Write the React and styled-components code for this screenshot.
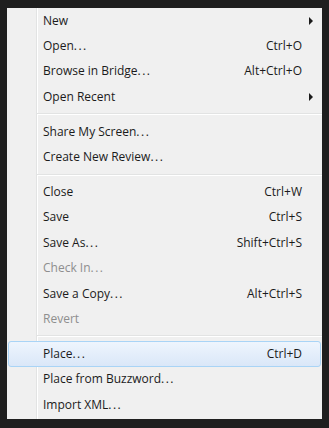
import React from 'react';
import styled, { createGlobalStyle } from 'styled-components';

const GlobalStyle = createGlobalStyle`
  html, body {
    margin: 0;
    padding: 0;
    background: #1f1f1f;
  }
`;

const Frame = styled.div`
  width: 329px;
  height: 428px;
  box-sizing: border-box;
  padding: 8px 7px 9px 7px;
  background: #1f1f1f;
`;

const Menu = styled.div`
  height: 100%;
  box-sizing: border-box;
  display: flex;
  flex-direction: column;
  background: linear-gradient(
    to right,
    #f0f0f0 29px,
    #e2e3e3 29px,
    #e2e3e3 30px,
    #ffffff 30px,
    #ffffff 31px,
    #f0f0f0 31px
  );
  font-family: "Open Sans", "Noto Sans", sans-serif;
  font-size: 12px;
  color: #1b1b1b;
`;

const Row = styled.div`
  position: relative;
  height: 25.4px;
  margin: 0 1px;
  box-sizing: border-box;
  display: grid;
  grid-template-columns: 1fr auto 11px;
  align-items: center;
  padding: 0 7px 0 34px;
  border: 1px solid ${p => (p.$active ? '#a9d4f6' : 'transparent')};
  border-radius: 3px;
  background: ${p =>
    p.$active ? 'linear-gradient(to bottom, #eef5fd, #dae7f8)' : 'transparent'};
  color: ${p => (p.$disabled ? '#8e8e8e' : 'inherit')};
  white-space: nowrap;
`;

const Label = styled.span`
  line-height: 1;
`;

const Dots = styled.span`
  letter-spacing: 1.5px;
`;

const Shortcut = styled.span`
  line-height: 1;
  text-align: right;
`;

const Arrow = styled.span`
  justify-self: end;
  width: 0;
  height: 0;
  border-top: 4px solid transparent;
  border-bottom: 4px solid transparent;
  border-left: 4px solid #1b1b1b;
`;

const Separator = styled.div`
  height: 9.5px;
  display: flex;
  flex-direction: column;
  justify-content: center;
  padding-left: 30px;

  &::before {
    content: '';
    display: block;
    height: 1px;
    background: #e2e3e3;
  }
  &::after {
    content: '';
    display: block;
    height: 1px;
    background: #ffffff;
  }
`;

const groups = [
  [
    { label: 'New', submenu: true },
    { label: 'Open', more: true, shortcut: 'Ctrl+O' },
    { label: 'Browse in Bridge', more: true, shortcut: 'Alt+Ctrl+O' },
    { label: 'Open Recent', submenu: true },
  ],
  [
    { label: 'Share My Screen', more: true },
    { label: 'Create New Review', more: true },
  ],
  [
    { label: 'Close', shortcut: 'Ctrl+W' },
    { label: 'Save', shortcut: 'Ctrl+S' },
    { label: 'Save As', more: true, shortcut: 'Shift+Ctrl+S' },
    { label: 'Check In', more: true, disabled: true },
    { label: 'Save a Copy', more: true, shortcut: 'Alt+Ctrl+S' },
    { label: 'Revert', disabled: true },
  ],
  [
    { label: 'Place', more: true, shortcut: 'Ctrl+D', active: true },
    { label: 'Place from Buzzword', more: true },
    { label: 'Import XML', more: true },
  ],
];

export default function App() {
  return (
    <>
      <GlobalStyle />
      <Frame>
        <Menu>
          {groups.map((items, gi) => (
            <React.Fragment key={gi}>
              {gi > 0 && <Separator />}
              {items.map(item => (
                <Row
                  key={item.label}
                  $active={item.active}
                  $disabled={item.disabled}
                >
                  <Label>
                    {item.label}
                    {item.more && <Dots>...</Dots>}
                  </Label>
                  <Shortcut>{item.shortcut || ''}</Shortcut>
                  {item.submenu ? <Arrow /> : <span />}
                </Row>
              ))}
            </React.Fragment>
          ))}
        </Menu>
      </Frame>
    </>
  );
}
